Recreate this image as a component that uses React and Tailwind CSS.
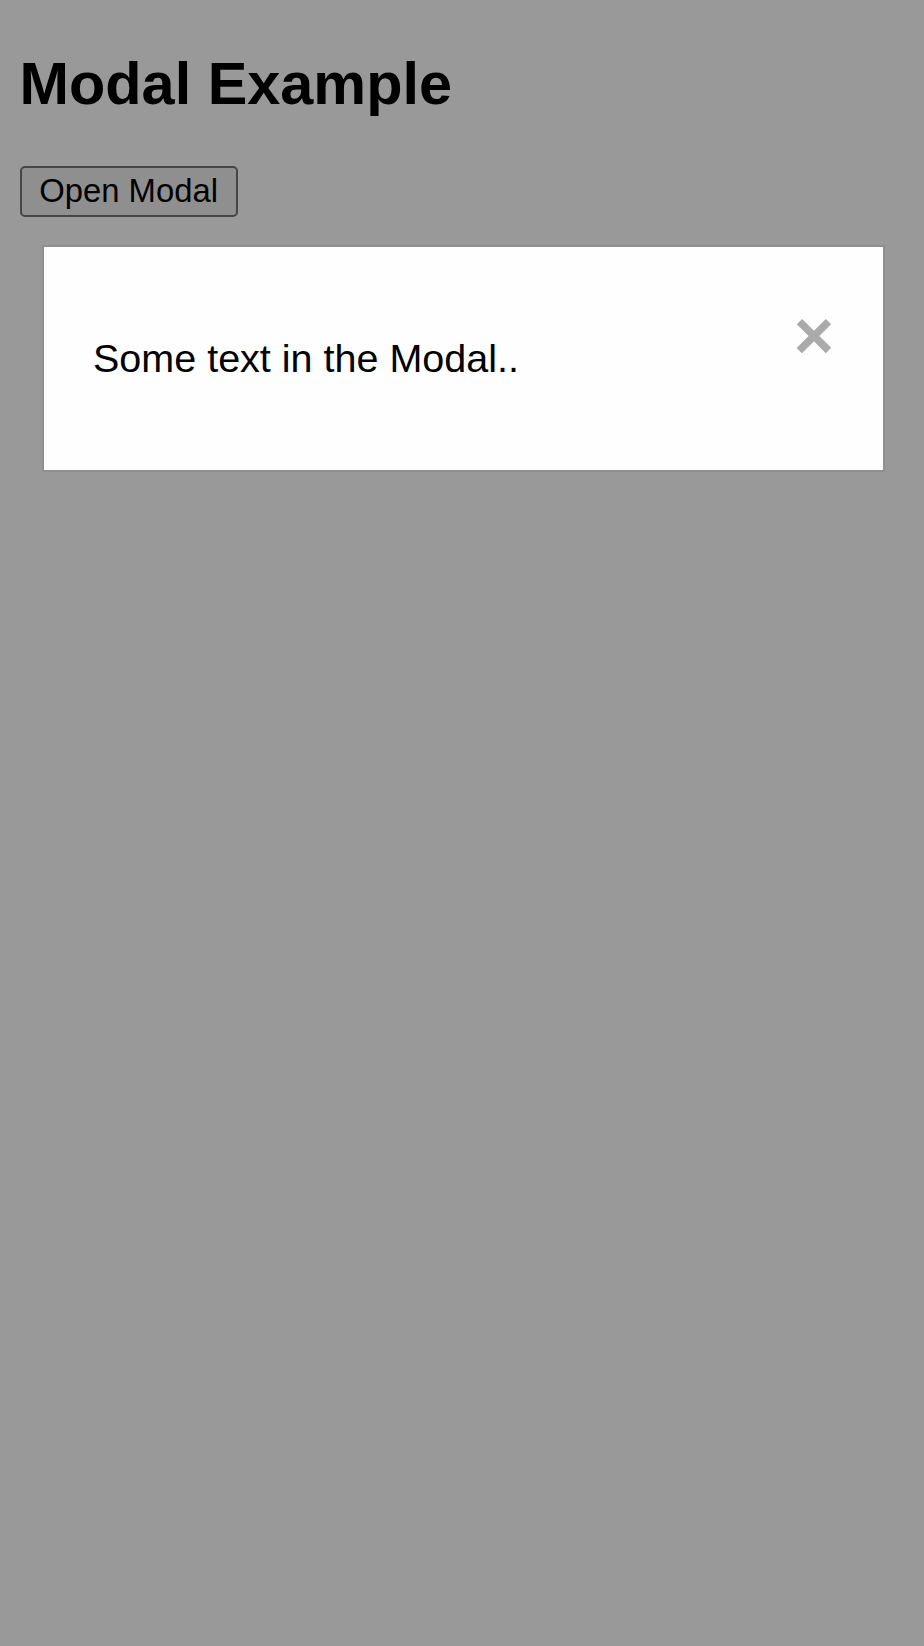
export default function App() {
  return (
    <div className="relative min-h-[1646px] bg-white text-black font-['Liberation_Sans',Arial,sans-serif]">
      <div className="px-[19.6px] pt-[48.8px]">
        <h2 className="text-[59.4px] font-bold leading-[normal]">Modal Example</h2>
        <button className="mt-[48px] flex h-[51px] w-[218px] items-center justify-center rounded-[5px] border-2 border-[#767676] bg-[#efefef] px-[16px] text-[32.8px] leading-[normal] text-black">
          Open Modal
        </button>
      </div>

      <div className="fixed inset-0 bg-black/40 pt-[245px]">
        <div className="ml-[42px] w-[843px] border-2 border-[#8f8f8f] bg-[#fefefe] p-[49px]">
          <span className="float-right text-[69px] font-bold leading-[normal] text-[#aaa]">×</span>
          <p className="mt-[40px] mb-[40px] text-[39.5px] leading-[normal]">Some text in the Modal..</p>
        </div>
      </div>
    </div>
  );
}
